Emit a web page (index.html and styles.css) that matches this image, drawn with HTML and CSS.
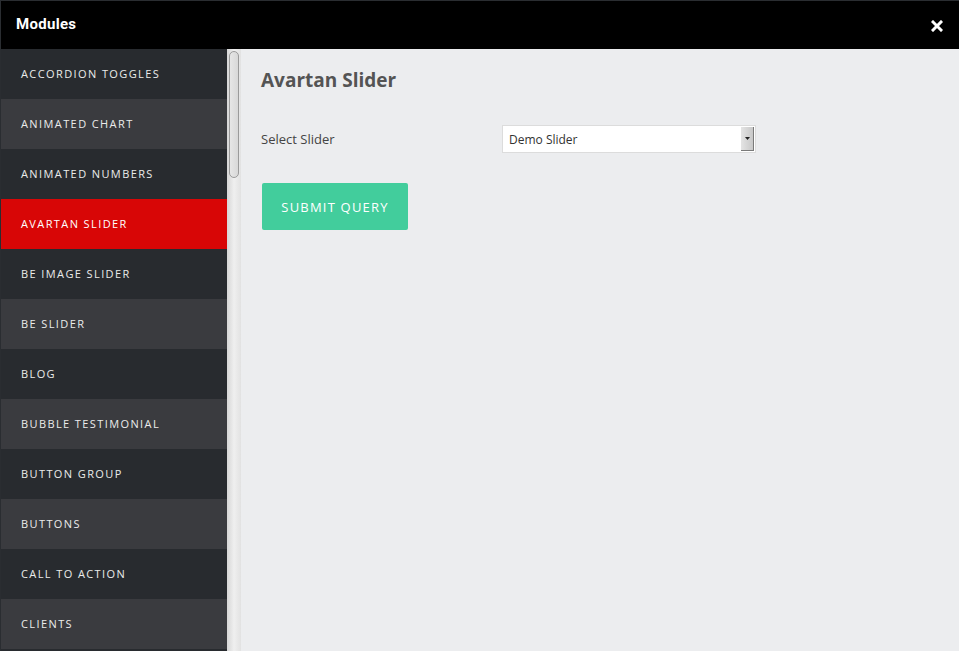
FILE: index.html
```html
<!DOCTYPE html>
<html>
<head>
<meta charset="utf-8">
<link rel="stylesheet" href="styles.css">
</head>
<body>
<div class="modal">
  <header class="head">
    <span class="head-title">Modules</span>
    <svg class="close" width="12" height="12" viewBox="0 0 12 12"><path d="M2 2 L10 10 M10 2 L2 10" stroke="#fff" stroke-width="3" stroke-linecap="square"/></svg>
  </header>
  <div class="body">
    <nav class="side">
      <div class="item">Accordion Toggles</div>
      <div class="item alt">Animated Chart</div>
      <div class="item">Animated Numbers</div>
      <div class="item active">Avartan Slider</div>
      <div class="item">BE Image Slider</div>
      <div class="item alt">BE Slider</div>
      <div class="item">Blog</div>
      <div class="item alt">Bubble Testimonial</div>
      <div class="item">Button Group</div>
      <div class="item alt">Buttons</div>
      <div class="item">Call to Action</div>
      <div class="item alt">Clients</div>
      <div class="item"></div>
    </nav>
    <div class="track"><div class="thumb"></div></div>
    <main class="content">
      <h2 class="title">Avartan Slider</h2>
      <div class="row">
        <label class="label">Select Slider</label>
        <div class="select"><span class="select-val">Demo Slider</span><span class="select-btn"><svg width="5" height="3" viewBox="0 0 5 3"><path d="M0 0H5L2.5 3Z" fill="#222"/></svg></span></div>
      </div>
      <button class="submit">Submit Query</button>
    </main>
  </div>
</div>
</body>
</html>
```

FILE: styles.css
```css
html, body {
  margin: 0;
  padding: 0;
  height: 100%;
  overflow: hidden;
  background: #2a2d31;
}
.modal {
  height: 650px;
  margin-top: 1px;
  margin-left: 1px;
  display: flex;
  flex-direction: column;
  background: #ecedef;
}
.head {
  height: 48px;
  flex: none;
  background: #000;
  display: flex;
  align-items: center;
  justify-content: space-between;
  padding: 0 16px 0 15px;
}
.head-title {
  color: #fff;
  font-family: Roboto, "Liberation Sans", sans-serif;
  font-weight: 700;
  font-size: 15px;
  letter-spacing: 0.3px;
  margin-top: -2px;
}
.close {
  display: block;
  margin-top: 1px;
}
.body {
  flex: 1;
  display: flex;
  overflow: hidden;
}
.side {
  width: 226px;
  flex: none;
  overflow: hidden;
}
.item {
  height: 50px;
  box-sizing: border-box;
  padding-bottom: 2px;
  display: flex;
  align-items: center;
  padding-left: 20px;
  background: #282b2f;
  color: #ebebeb;
  font-family: "Open Sans", "Liberation Sans", sans-serif;
  font-size: 11px;
  text-transform: uppercase;
  letter-spacing: 1.4px;
  font-weight: 400;
}
.item.alt {
  background: #3a3b3f;
}
.item.active {
  background: #d80606;
  color: #fff;
}
.track {
  width: 14px;
  flex: none;
  background: linear-gradient(to right, #d6d6d6, #efefef 50%, #e2e2e2);
  padding-top: 2px;
}
.thumb {
  width: 8px;
  height: 125px;
  margin-left: 2px;
  border: 1px solid #9a9a9a;
  border-radius: 5px;
  background: linear-gradient(to right, #e6e6e6, #d8d8d8);
}
.content {
  flex: 1;
  padding: 0 20px;
  font-family: "Open Sans", "Liberation Sans", sans-serif;
}
.title {
  margin: 19px 0 0 0;
  font-size: 19px;
  font-weight: 700;
  color: #545454;
  line-height: 24px;
}
.row {
  display: flex;
  align-items: center;
  margin-top: 33px;
}
.label {
  width: 241px;
  font-size: 13px;
  color: #444;
}
.select {
  width: 252px;
  height: 26px;
  border: 1px solid #dcdcdc;
  background: #fff;
  display: flex;
  align-items: center;
  justify-content: space-between;
}
.select-val {
  padding-left: 6px;
  font-size: 12px;
  color: #333;
}
.select-btn {
  width: 13px;
  height: 24px;
  margin-right: 1px;
  background: linear-gradient(to right, #e4e4e4, #c8c8c8);
  border-right: 1px solid #7a7a7a;
  border-bottom: 1px solid #7a7a7a;
  display: flex;
  align-items: center;
  justify-content: center;
  box-sizing: border-box;
}
.submit {
  display: block;
  margin: 30px 0 0 1px;
  width: 146px;
  height: 47px;
  border: none;
  border-radius: 2px;
  background: #42cd9c;
  color: #fff;
  font-family: "Open Sans", "Liberation Sans", sans-serif;
  font-size: 13px;
  letter-spacing: 1.2px;
  text-transform: uppercase;
}
```
